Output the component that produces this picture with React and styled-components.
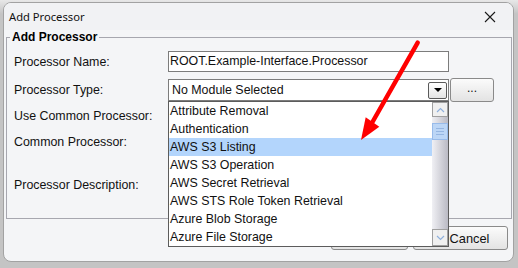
import React from "react";
import styled, { createGlobalStyle } from "styled-components";

const GlobalStyle = createGlobalStyle`
  html, body { margin: 0; padding: 0; }
  body {
    width: 518px;
    height: 268px;
    overflow: hidden;
    background: linear-gradient(#e8e8e8, #c4c4c4 14px);
    font-family: "Liberation Sans", Arial, sans-serif;
    font-size: 12.4px;
    color: #111;
  }
`;

const Page = styled.div`
  position: relative;
  width: 518px;
  height: 268px;
  padding: 2px 0 0 3px;
  box-sizing: border-box;
`;

const Window = styled.div`
  width: 511px;
  height: 260px;
  box-sizing: border-box;
  border: 1px solid #a2a2a2;
  border-radius: 8px;
  background: #f4f5f7;
  display: flex;
  flex-direction: column;
  overflow: hidden;
`;

const TitleBar = styled.div`
  height: 27px;
  display: flex;
  align-items: center;
  justify-content: space-between;
  padding-left: 5px;
  background: #f1f2f4;
  font-family: "Noto Sans", "Open Sans", sans-serif;
  font-size: 11.2px;
  color: #111;
`;

const CloseBtn = styled.div`
  width: 44px;
  height: 27px;
  display: flex;
  align-items: center;
  justify-content: center;
  margin-right: 1px;
`;

const Body = styled.div`
  flex: 1;
  padding: 7px 1px 0 2px;
  display: flex;
  flex-direction: column;
`;

const Group = styled.div`
  height: 182px;
  box-sizing: border-box;
  border: 1px solid #a7a7af;
  display: flex;
  flex-direction: column;
  align-items: flex-start;
`;

const Legend = styled.div`
  margin: -8px 0 0 3px;
  padding: 0 2px;
  line-height: 14px;
  font-weight: bold;
  font-size: 12px;
  color: #000;
  background: #f4f5f7;
`;

const Form = styled.div`
  margin-top: 7px;
  padding-left: 7px;
  display: flex;
  flex-direction: column;
  align-self: stretch;
`;

const Row = styled.div`
  display: flex;
  align-items: ${(p) => (p.$top ? "flex-start" : "center")};
  height: ${(p) => p.$h}px;
  margin-top: ${(p) => p.$mt || 0}px;
  padding-top: ${(p) => p.$pt || 0}px;
  box-sizing: border-box;
`;

const Label = styled.div`
  width: 154px;
  line-height: 14px;
`;

const TextField = styled.div`
  width: 281px;
  height: 21px;
  box-sizing: border-box;
  border: 1px solid #7c7c7c;
  background: #fff;
  padding-left: 1px;
  line-height: 19px;
`;

const ComboWrap = styled.div`
  position: relative;
  width: 281px;
  height: 22px;
`;

const Combo = styled.div`
  height: 22px;
  box-sizing: border-box;
  border: 1px solid #7c7c7c;
  background: #fff;
  display: flex;
  align-items: center;
  justify-content: space-between;
  padding: 0 1px 0 3px;
`;

const ArrowBtn = styled.div`
  width: 19px;
  height: 17px;
  box-sizing: border-box;
  border: 1px solid #5a5a5a;
  border-radius: 2px;
  background: linear-gradient(#ffffff, #e4e4e4);
  display: flex;
  align-items: center;
  justify-content: center;
`;

const Triangle = styled.div`
  width: 0;
  height: 0;
  border-left: 4px solid transparent;
  border-right: 4px solid transparent;
  border-top: 4px solid #000;
`;

const Button = styled.div`
  width: ${(p) => p.$w}px;
  height: 24px;
  box-sizing: border-box;
  border: 1px solid #8a8a8a;
  border-radius: 3px;
  background: linear-gradient(#fbfbfb, #e3e3e3);
  display: flex;
  align-items: center;
  justify-content: center;
  padding-left: ${(p) => p.$pl || 0}px;
  font-size: 12.8px;
  color: #111;
`;

const DotsButton = styled(Button)`
  margin-left: 1px;
  font-size: 12px;
  line-height: 12px;
  padding-bottom: 4px;
`;

const ButtonRow = styled.div`
  margin-top: 7px;
  padding-right: 4px;
  display: flex;
  justify-content: flex-end;
  gap: 5px;
`;

const Popup = styled.div`
  position: absolute;
  left: 0;
  top: 100%;
  width: 281px;
  height: 146px;
  box-sizing: border-box;
  border: 1px solid #5c5c5c;
  background: #fff;
  display: flex;
  z-index: 2;
`;

const Items = styled.div`
  flex: 1;
  display: flex;
  flex-direction: column;
`;

const Item = styled.div`
  height: 18px;
  line-height: 18px;
  padding-left: 1px;
  white-space: nowrap;
  background: ${(p) => (p.$selected ? "#b3d5fc" : "transparent")};
`;

const Scrollbar = styled.div`
  width: 16px;
  display: flex;
  flex-direction: column;
  background: linear-gradient(to right, #f0f0f4, #babac4);
`;

const ScrollBtn = styled.div`
  height: ${(p) => p.$h}px;
  box-sizing: border-box;
  border: 1px solid #a0a0a0;
  background: #f0f0f0;
  display: flex;
  align-items: center;
  justify-content: center;
`;

const Track = styled.div`
  flex: 1;
`;

const Thumb = styled.div`
  margin-top: 6px;
  height: 17px;
  box-sizing: border-box;
  border: 1px solid #98bbea;
  background: #bcd6f6;
  display: flex;
  flex-direction: column;
  align-items: center;
  justify-content: center;
  gap: 2px;
`;

const Grip = styled.div`
  width: 8px;
  height: 1px;
  background: #95b6e2;
`;

const Overlay = styled.svg`
  position: absolute;
  left: 0;
  top: 0;
  pointer-events: none;
  z-index: 5;
`;

const types = [
  "Attribute Removal",
  "Authentication",
  "AWS S3 Listing",
  "AWS S3 Operation",
  "AWS Secret Retrieval",
  "AWS STS Role Token Retrieval",
  "Azure Blob Storage",
  "Azure File Storage",
];

function Chevron({ up }) {
  return (
    <svg width="9" height="6" viewBox="0 0 9 6">
      <path
        d={up ? "M1 5 L4.5 1.5 L8 5" : "M1 1 L4.5 4.5 L8 1"}
        fill="none"
        stroke="#8fb0dc"
        strokeWidth="1.2"
      />
    </svg>
  );
}

function App() {
  return (
    <Page>
      <GlobalStyle />
      <Window>
        <TitleBar>
          <span>Add Processor</span>
          <CloseBtn>
            <svg width="12" height="12" viewBox="0 0 12 12">
              <path d="M1 1 L11 11 M11 1 L1 11" stroke="#1a1a1a" strokeWidth="1.1" />
            </svg>
          </CloseBtn>
        </TitleBar>
        <Body>
          <Group>
            <Legend>Add Processor</Legend>
            <Form>
              <Row $h={21}>
                <Label>Processor Name:</Label>
                <TextField>ROOT.Example-Interface.Processor</TextField>
              </Row>
              <Row $h={24} $mt={6}>
                <Label>Processor Type:</Label>
                <ComboWrap>
                  <Combo>
                    <span>No Module Selected</span>
                    <ArrowBtn>
                      <Triangle />
                    </ArrowBtn>
                  </Combo>
                  <Popup>
                    <Items>
                      {types.map((t) => (
                        <Item key={t} $selected={t === "AWS S3 Listing"}>
                          {t}
                        </Item>
                      ))}
                    </Items>
                    <Scrollbar>
                      <ScrollBtn $h={15}>
                        <Chevron up />
                      </ScrollBtn>
                      <Track>
                        <Thumb>
                          <Grip />
                          <Grip />
                          <Grip />
                        </Thumb>
                      </Track>
                      <ScrollBtn $h={17}>
                        <Chevron />
                      </ScrollBtn>
                    </Scrollbar>
                  </Popup>
                </ComboWrap>
                <DotsButton $w={44}>...</DotsButton>
              </Row>
              <Row $h={28}>
                <Label>Use Common Processor:</Label>
              </Row>
              <Row $h={24}>
                <Label>Common Processor:</Label>
              </Row>
              <Row $h={50} $pt={24} $top>
                <Label>Processor Description:</Label>
              </Row>
            </Form>
          </Group>
          <ButtonRow>
            <Button $w={77}>OK</Button>
            <Button $w={95} $pl={18}>Cancel</Button>
          </ButtonRow>
        </Body>
      </Window>
      <Overlay width="518" height="268" viewBox="0 0 518 268">
        <line x1="417.7" y1="42.7" x2="372.5" y2="122" stroke="#ff0000" strokeWidth="4.5" strokeLinecap="round" />
        <polygon points="361,140 365.7,117.3 379.3,126.7" fill="#ff0000" />
      </Overlay>
    </Page>
  );
}

export default App;
